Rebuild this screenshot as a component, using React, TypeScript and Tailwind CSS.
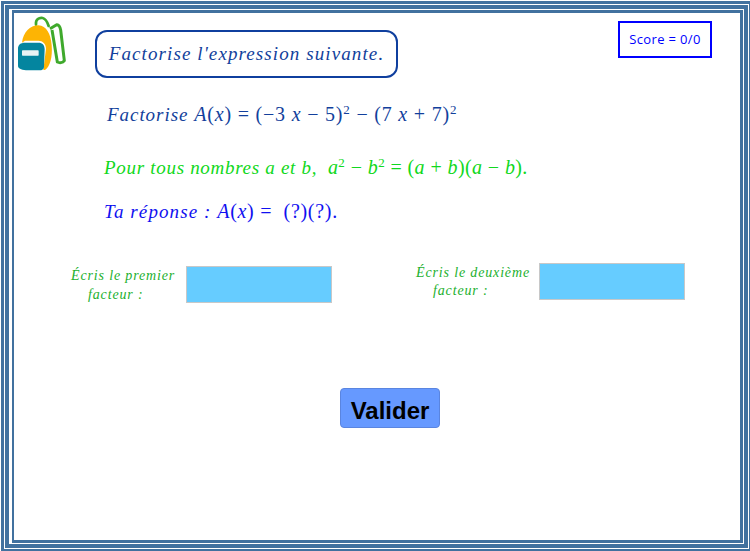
const serif = "font-['Liberation_Serif',serif]";

function I({ children }: { children: React.ReactNode }) {
  return <span className="italic">{children}</span>;
}

function T({ children, className }: { children: React.ReactNode; className: string }) {
  return <span className={`text-[19px] italic ${className}`}>{children}</span>;
}

function Sq() {
  return <sup className="-top-[7px] text-[13px]">2</sup>;
}

function Backpack() {
  return (
    <svg width="50" height="55" viewBox="54 42 150 165" className="shrink-0">
      <path d="M108 68 C106 52 118 46 128 48 C138 50 142 60 146 72" fill="none" stroke="#3fa92c" strokeWidth="8" strokeLinecap="round" />
      <path d="M150 80 L170 68 C177 67 180 74 182 84 L193 176 C188 183 178 183 172 180 L156 84" fill="none" stroke="#3fa92c" strokeWidth="9" strokeLinejoin="round" />
      <path d="M66 122 C70 90 90 70 115 70 C140 72 152 95 155 130 C158 165 150 195 135 204 L130 204 L138 140 C138 125 128 116 115 116 L75 116 Z" fill="#fdb404" />
      <path d="M54 140 C54 128 62 122 75 122 L115 122 C128 122 134 130 134 142 L132 195 C132 202 126 205 118 205 C100 205 70 206 60 200 C55 198 54 195 54 190Z" fill="#04859f" />
      <rect x="66" y="145" width="50" height="16" rx="2" fill="#e8f2f4" />
    </svg>
  );
}

function Field({ label, rest, className, labelClass }: { label: string; rest: string; className: string; labelClass: string }) {
  return (
    <div className={`flex items-center ${className}`}>
      <div className={`text-[14px] tracking-[0.85px] text-[#22b02e] italic ${serif} ${labelClass}`}>
        <div className="whitespace-nowrap">{label}</div>
        <div className="pl-[17px]">{rest}</div>
      </div>
      <div className="h-[37px] w-[146px] border border-[#c8c8c8] bg-[#66ccff]" />
    </div>
  );
}

export default function App() {
  return (
    <div className="h-[551px] w-[750px] overflow-hidden bg-white pl-[1px] pt-[1px]">
      <div className="h-full border-[3px] border-r-[1px] border-b-[2px] border-[#41719f] pl-[1px] pt-[1px] pr-[1px] pb-[1px]">
        <div className="h-full border-[4px] border-[#41719f] pl-[3px] pt-[1px] pr-[1px] pb-[1px]">
          <div className="h-full border-[3px] border-[#41719f] border-l-[2px]">
            <div className="flex items-start pl-[4px] pt-[3px]">
              <Backpack />
              <div className={`ml-[27px] mt-[14px] flex h-[48px] w-[303px] items-center justify-center rounded-[12px] border-2 border-[#0f3f9e] text-[#123f9c] ${serif}`}>
                <span className="text-[19px] italic tracking-[1.1px]">Factorise l'expression suivante.</span>
              </div>
              <div className="ml-[220px] mt-[5px] flex h-[37px] w-[94px] items-center justify-center border-2 border-[#0000ff] font-['Open_Sans',sans-serif] text-[13px] tracking-[0.35px] text-[#0000ff]">
                Score = 0/0
              </div>
            </div>
            <div className={`ml-[93px] mt-[22px] text-[20px] leading-[28px] tracking-[0.8px] text-[#123f9c] ${serif}`}>
              <T className="tracking-[0.95px]">Factorise</T> <I>A</I>(<I>x</I>) = (−3 <I>x</I> − 5)<Sq /> − (7 <I>x</I> + 7)<Sq />
            </div>
            <div className={`ml-[90px] mt-[24px] text-[20px] leading-[28px] tracking-[0.4px] text-[#10d820] ${serif}`}>
              <T className="tracking-[0.7px]">Pour tous nombres a et b,</T>&nbsp; <I>a</I><Sq /> − <I>b</I><Sq /> = (<I>a</I> + <I>b</I>)(<I>a</I> − <I>b</I>).
            </div>
            <div className={`ml-[90px] mt-[15px] text-[20px] leading-[28px] tracking-[0.7px] text-[#1010f0] ${serif}`}>
              <T className="tracking-[1.1px]">Ta réponse :</T> <I>A</I>(<I>x</I>) = &nbsp;(?)(?).
            </div>
            <div className="mt-[37px] flex items-start">
              <Field label="Écris le premier" rest="facteur :" className="ml-[57px] mt-[2px]" labelClass="w-[115px] pt-[1px] leading-[19px]" />
              <Field label="Écris le deuxième" rest="facteur :" className="ml-[84px]" labelClass="w-[123px] leading-[18px]" />
            </div>
            <button className="ml-[326px] mt-[84px] h-[40px] w-[100px] rounded-[4px] border border-[#5a85e0] bg-[#6699ff] pt-[4px] font-['Liberation_Sans',sans-serif] text-[24px] font-bold text-black">
              Valider
            </button>
          </div>
        </div>
      </div>
    </div>
  );
}
